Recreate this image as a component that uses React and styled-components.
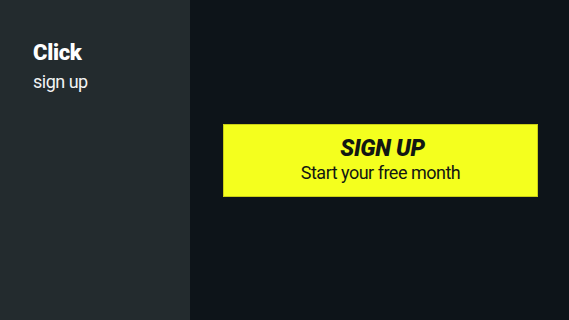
import React from 'react';
import styled, { createGlobalStyle } from 'styled-components';

const GlobalStyle = createGlobalStyle`
  html, body {
    margin: 0;
    padding: 0;
    background: #0d1419;
  }
  body {
    font-family: Roboto, "Liberation Sans", sans-serif;
  }
`;

const Screen = styled.div`
  display: flex;
  width: 569px;
  height: 320px;
  overflow: hidden;
`;

const Sidebar = styled.aside`
  display: flex;
  flex-direction: column;
  width: 190px;
  flex-shrink: 0;
  padding: 40px 33px;
  box-sizing: border-box;
  background: #232b2e;
  color: #ffffff;
`;

const Title = styled.h1`
  margin: 0;
  font-size: 22px;
  line-height: 26px;
  font-weight: 900;
  letter-spacing: -0.3px;
`;

const Subtitle = styled.p`
  margin: 5px 0 0;
  font-size: 18px;
  line-height: 22px;
  font-weight: 400;
  letter-spacing: -0.5px;
  color: #f2f4f4;
`;

const Main = styled.main`
  flex: 1;
  display: flex;
  align-items: center;
  justify-content: center;
  background: #0d1419;
`;

const SignUpButton = styled.button`
  display: flex;
  flex-direction: column;
  align-items: center;
  justify-content: center;
  width: 315px;
  height: 73px;
  margin: 0 0 0 2px;
  padding: 0;
  box-sizing: border-box;
  border: 1px solid #c9cf16;
  background: #f4ff1e;
  color: #121712;
  font-family: inherit;
  cursor: pointer;
`;

const ButtonLabel = styled.span`
  font-size: 23px;
  line-height: 24px;
  font-weight: 900;
  font-style: italic;
  letter-spacing: -0.3px;
  margin-left: 4px;
`;

const ButtonHint = styled.span`
  margin-top: 1px;
  font-size: 18px;
  line-height: 22px;
  font-weight: 400;
  letter-spacing: -0.5px;
`;

export default function App() {
  return (
    <>
      <GlobalStyle />
      <Screen>
        <Sidebar>
          <Title>Click</Title>
          <Subtitle>sign up</Subtitle>
        </Sidebar>
        <Main>
          <SignUpButton>
            <ButtonLabel>SIGN UP</ButtonLabel>
            <ButtonHint>Start your free month</ButtonHint>
          </SignUpButton>
        </Main>
      </Screen>
    </>
  );
}
